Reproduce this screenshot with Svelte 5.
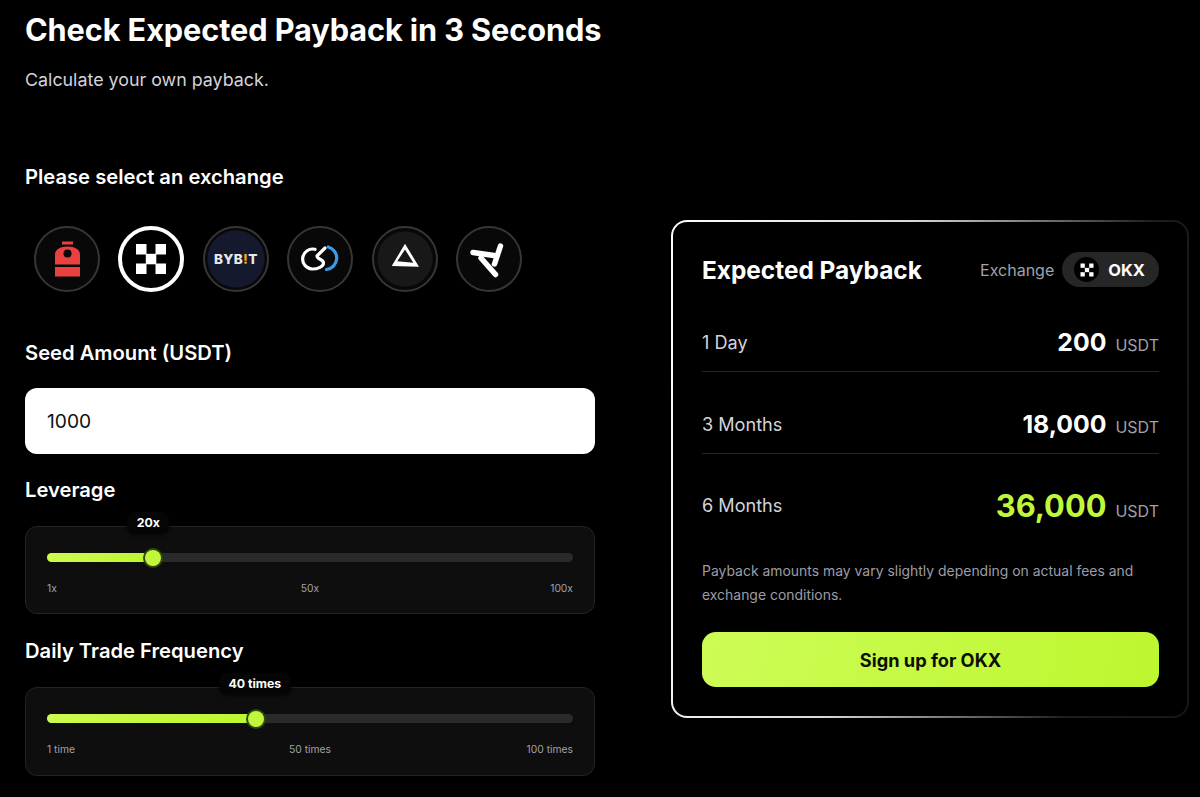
<script lang="ts">
  const rows = [
    { label: '1 Day', value: '200', cls: '' },
    { label: '3 Months', value: '18,000', cls: '' },
    { label: '6 Months', value: '36,000', cls: 'big' }
  ]
  const sliders = [
    { name: 'Leverage', tip: '20x', tipShift: -5, pct: 20.2, marks: ['1x', '50x', '100x'] },
    { name: 'Daily Trade Frequency', tip: '40 times', tipShift: -1, pct: 39.7, marks: ['1 time', '50 times', '100 times'] }
  ]
</script>

<div class="page">
  <section class="left">
    <h1>Check Expected Payback in 3 Seconds</h1>
    <p class="sub">Calculate your own payback.</p>

    <h2 class="select-title">Please select an exchange</h2>
    <div class="exchanges">
      <div class="ex">
        <svg viewBox="0 0 66 66" width="66" height="66">
          <path d="M28 15.500h11v3h-11z" fill="#e8413f" />
          <path d="M21 38.500v-10c0-5 5-8 12.500-8s12.500 3 12.500 8v10z" fill="#e8413f" />
          <circle cx="33.500" cy="27.500" r="4" fill="#080808" />
          <rect x="21" y="41" width="25" height="9.500" fill="#e8413f" />
        </svg>
      </div>
      <div class="ex active">
        <svg viewBox="0 0 66 66" width="66" height="66" fill="#fff">
          <rect x="18" y="18" width="10.500" height="10.500" />
          <rect x="37.500" y="18" width="10.500" height="10.500" />
          <rect x="27.800" y="27.800" width="10.500" height="10.500" />
          <rect x="18" y="37.500" width="10.500" height="10.500" />
          <rect x="37.500" y="37.500" width="10.500" height="10.500" />
        </svg>
      </div>
      <div class="ex bybit">
        <span>BYB<i>!</i>T</span>
      </div>
      <div class="ex">
        <svg viewBox="0 0 66 66" width="66" height="66" fill="none" stroke-width="3.200" stroke-linecap="round">
          <path d="M28 23.300A10 10 0 1 0 25 43C31 43 36.500 40.500 36.500 37C36.500 33 30 33.500 30 30L38 22" stroke="#fff" />
          <path d="M41.300 21A11.500 11.500 0 0 1 39.500 43.500" stroke="#3d9be9" />
        </svg>
      </div>
      <div class="ex dark">
        <svg viewBox="0 0 66 66" width="66" height="66">
          <path d="M33 17.800L47 40.800L19.700 40ZM33 23.500L25.300 35.200L41.300 36.800Z" fill="#fff" fill-rule="evenodd" />
        </svg>
      </div>
      <div class="ex">
        <svg viewBox="0 0 66 66" width="66" height="66" fill="none" stroke="#fff" stroke-width="5.500" stroke-linecap="round">
          <path d="M17 26.500L38 29.500" />
          <path d="M44.500 20L38.500 38" />
          <path d="M25 32L39.500 48.500" />
        </svg>
      </div>
    </div>

    <h2 class="seed-title">Seed Amount (USDT)</h2>
    <input class="amount" type="text" value="1000" />

    {#each sliders as s}
      <h2 class="slider-title">{s.name}</h2>
      <div class="slider-box">
        <div class="track">
          <div class="fill" style="width: {s.pct}%"></div>
          <div class="thumb" style="left: {s.pct}%">
            <span class="tip" style="margin-left: {s.tipShift}px">{s.tip}</span>
          </div>
        </div>
        <div class="marks">
          {#each s.marks as m}
            <span>{m}</span>
          {/each}
        </div>
      </div>
    {/each}
  </section>

  <aside class="card">
    <div class="card-head">
      <h3>Expected Payback</h3>
      <div class="ex-tag">
        <span class="ex-label">Exchange</span>
        <div class="pill">
          <span class="pill-icon">
            <svg viewBox="0 0 14 14" width="14" height="14" fill="#fff">
              <rect x="0.500" y="0.500" width="4.300" height="4.300" />
              <rect x="9.200" y="0.500" width="4.300" height="4.300" />
              <rect x="4.850" y="4.850" width="4.300" height="4.300" />
              <rect x="0.500" y="9.200" width="4.300" height="4.300" />
              <rect x="9.200" y="9.200" width="4.300" height="4.300" />
            </svg>
          </span>
          <span class="pill-text">OKX</span>
        </div>
      </div>
    </div>

    {#each rows as r}
      <div class="row {r.cls}">
        <span class="row-label">{r.label}</span>
        <span class="row-value"><b>{r.value}</b><small>USDT</small></span>
      </div>
    {/each}

    <p class="note">Payback amounts may vary slightly depending on actual fees and exchange conditions.</p>
    <button class="cta">Sign up for OKX</button>
  </aside>
</div>

<style>
  :global(body) { background: #000; }
  .page {
    display: flex;
    align-items: flex-start;
    width: 1200px;
    height: 797px;
    overflow: hidden;
    box-sizing: border-box;
    padding: 12px 0 0 25px;
    background: #000;
    color: #fff;
    font-family: Inter, "Liberation Sans", sans-serif;
  }
  .left { width: 570px; flex: none; }
  h1 { margin: 0; font-size: 30.7px; line-height: 36px; font-weight: 700; white-space: nowrap; letter-spacing: -0.1px; }
  .sub { margin: 18px 0 0; font-size: 17.850px; line-height: 28px; color: #d4d4d8; }
  h2 { margin: 0; font-size: 20.200px; line-height: 28px; font-weight: 600; }
  .select-title { margin-top: 69px; }
  .exchanges { display: flex; gap: 18.400px; margin: 35px 0 0 9px; }
  .ex {
    width: 66px;
    height: 66px;
    flex: none;
    box-sizing: border-box;
    border-radius: 50%;
    border: 2px solid #363636;
    background: #080808;
    display: flex;
    align-items: center;
    justify-content: center;
    overflow: hidden;
  }
  .ex svg { flex: none; }
  .ex.active { border: 4px solid #fff; background: #000; }
  .ex.dark { background: radial-gradient(circle, #181818 27px, #080808 28px); }
  .ex.bybit { background: radial-gradient(circle, #15192e 28px, #080808 29px); font-size: 13.500px; font-weight: 800; letter-spacing: 0.3px; color: #e8e8ee; }
  .ex.bybit i { color: #e8a820; font-style: normal; }
  .seed-title { margin-top: 47px; }
  .amount {
    display: block;
    width: 100%;
    height: 66px;
    margin-top: 21px;
    box-sizing: border-box;
    border: 0;
    border-radius: 12px;
    background: #fff;
    padding: 0 22px;
    font: 400 19.2px Inter, sans-serif;
    color: #111;
  }
  .slider-title { margin-top: 22px; }
  .slider-title ~ .slider-title { margin-top: 23px; }
  .slider-box {
    margin-top: 22px;
    height: 88px;
    box-sizing: border-box;
    border: 1px solid #232323;
    border-radius: 12px;
    background: #0e0e0e;
    padding: 26px 21px 0;
  }
  .slider-box:last-child { height: 89px; }
  .track { position: relative; height: 9px; border-radius: 5px; background: #2a2a2a; }
  .fill { height: 100%; border-radius: 5px; background: linear-gradient(90deg, #cdfb4e, #bdf72f); }
  .thumb {
    position: absolute;
    top: 50%;
    width: 16px;
    height: 16px;
    transform: translate(-50%, -50%);
    border-radius: 50%;
    background: #c1f73a;
    box-shadow: 0 0 0 2px #2f4a08;
  }
  .tip {
    position: absolute;
    left: 50%;
    bottom: 32px;
    transform: translateX(-50%);
    padding: 3px 9px;
    border-radius: 8px;
    background: #050505;
    box-shadow: 0 0 4px #000;
    font-size: 12.300px;
    line-height: 16px;
    font-weight: 700;
    white-space: nowrap;
  }
  .marks {
    display: grid;
    grid-template-columns: 1fr auto 1fr;
    margin-top: 18px;
    font-size: 10.300px;
    line-height: 16px;
    color: #a1a1aa;
  }
  .marks span:last-child { text-align: right; }
  .card {
    flex: none;
    width: 518px;
    height: 498px;
    margin: 208px 0 0 76px;
    box-sizing: border-box;
    padding: 30px 28px 30px 29px;
    border: 2px solid transparent;
    border-radius: 16px;
    background:
      linear-gradient(#000, #000) padding-box,
      linear-gradient(100deg, #fff 0%, #d8d8d8 40%, #1c1c1c 80%, #161616 100%) border-box;
  }
  .card-head { display: flex; align-items: center; justify-content: space-between; height: 35px; }
  h3 { margin: 0; font-size: 24.400px; line-height: 32px; font-weight: 700; }
  .ex-tag { display: flex; align-items: center; gap: 8px; }
  .ex-label { font-size: 16px; color: #a1a1aa; }
  .pill {
    display: flex;
    align-items: center;
    height: 35px;
    box-sizing: border-box;
    padding: 0 14px 0 12px;
    gap: 9px;
    border-radius: 18px;
    background: #262626;
  }
  .pill-icon {
    width: 25px;
    height: 25px;
    border-radius: 50%;
    background: #000;
    display: flex;
    align-items: center;
    justify-content: center;
  }
  .pill-text { font-size: 16.500px; font-weight: 700; }
  .row {
    display: flex;
    align-items: center;
    justify-content: space-between;
    height: 82px;
    box-sizing: border-box;
    padding-top: 22px;
    border-bottom: 1px solid #262626;
  }
  .card-head + .row { margin-top: 3px; }
  .row.big { border-bottom: 0; padding-top: 20px; }
  .row-label { font-size: 18.100px; color: #d4d4d8; }
  .row-value { display: flex; align-items: baseline; gap: 9px; }
  .row-value b { font-size: 24.800px; font-weight: 700; }
  .row-value small { font-size: 16px; color: #a1a1aa; }
  .row.big b { font-size: 30.800px; color: #c1f73a; }
  .note { margin: 23px 0 0; font-size: 13.950px; line-height: 24px; color: #9c9ca6; }
  .cta {
    display: block;
    width: 100%;
    height: 55px;
    margin-top: 25px;
    border: 0;
    border-radius: 14px;
    background: linear-gradient(100deg, #cdfc56, #bdf72f);
    color: #0b0f00;
    font: 700 18.200px Inter, sans-serif;
  }
</style>
